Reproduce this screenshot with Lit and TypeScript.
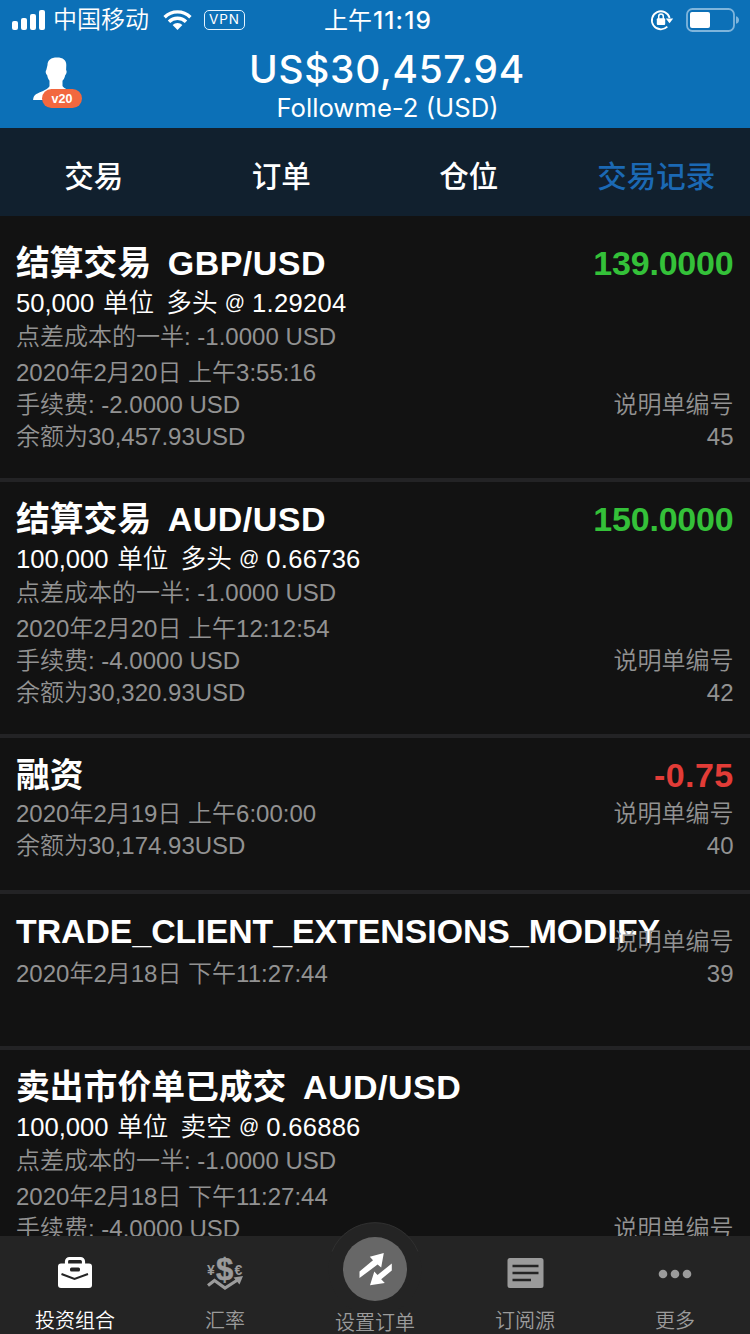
import { LitElement, html, svg, css, nothing } from "lit";
import { customElement, property } from "lit/decorators.js";
import { classMap } from "lit/directives/class-map.js";

interface Entry {
  title: string;
  pair?: string;
  amount?: string;
  negative?: boolean;
  units?: string;
  side?: string;
  price?: string;
  cost?: string;
  date: string;
  fee?: string;
  balance?: string;
  ref: string;
  short?: boolean;
  bare?: boolean;
}

const entries: Entry[] = [
  { title: "结算交易", pair: "GBP/USD", amount: "139.0000", units: "50,000", side: "多头", price: "1.29204", cost: "点差成本的一半: -1.0000 USD", date: "2020年2月20日 上午3:55:16", fee: "手续费: -2.0000 USD", balance: "余额为30,457.93USD", ref: "45" },
  { title: "结算交易", pair: "AUD/USD", amount: "150.0000", units: "100,000", side: "多头", price: "0.66736", cost: "点差成本的一半: -1.0000 USD", date: "2020年2月20日 上午12:12:54", fee: "手续费: -4.0000 USD", balance: "余额为30,320.93USD", ref: "42" },
  { title: "融资", amount: "-0.75", negative: true, date: "2020年2月19日 上午6:00:00", balance: "余额为30,174.93USD", ref: "40", short: true },
  { title: "TRADE_CLIENT_EXTENSIONS_MODIFY", date: "2020年2月18日 下午11:27:44", ref: "39", short: true, bare: true },
  { title: "卖出市价单已成交", pair: "AUD/USD", units: "100,000", side: "卖空", price: "0.66886", cost: "点差成本的一半: -1.0000 USD", date: "2020年2月18日 下午11:27:44", fee: "手续费: -4.0000 USD", ref: "" },
];

@customElement("status-bar")
class StatusBar extends LitElement {
  static styles = css`
    :host { display: grid; grid-template: 40px / 1fr auto 1fr; align-items: center; height: 40px; padding: 0 12px; color: #fff;
      font: 500 24px/40px "Inter", "Noto Sans CJK SC", sans-serif; }
    .side { display: flex; align-items: center; height: 40px; }
    .right { justify-content: flex-end; margin-right: -2px; }
    .carrier { font-size: 24px; font-weight: 350; margin: 0 14px 0 7px; }
    .time { margin-left: 6px; font-weight: 400; }
    .digits { font-size: 24.5px; font-weight: 500; letter-spacing: 1.1px; margin-left: 1px; }
    .vpn { margin-left: 12px; box-sizing: border-box; width: 41px; height: 20px; border: 1.5px solid #e4f4ff; border-radius: 5px;
      font-size: 13.5px; font-weight: 400; line-height: 17px; text-align: center; letter-spacing: 0.9px; }
    .lock { margin-right: 12px; }
    svg { display: block; flex: none; }
  `;
  render() {
    return html`
      <div class="side">
        <svg width="34" height="20" viewBox="0 0 34 20" fill="#fff">
          <rect x="0" y="11" width="6" height="9" rx="2" /><rect x="9" y="8" width="6" height="12" rx="2" />
          <rect x="18" y="4" width="6" height="16" rx="2" /><rect x="27" y="0" width="6" height="20" rx="2" />
        </svg>
        <span class="carrier">中国移动</span>
        <svg width="29" height="20" viewBox="0 0 29 20" fill="none" stroke="#fff" stroke-width="3.4">
          <path d="M1.6 7.2a18.3 18.3 0 0 1 25.8 0" /><path d="M6 11.8a12 12 0 0 1 17 0" />
          <path d="M14.5 20l-4.900-4.900a7 7 0 0 1 9.800 0z" fill="#fff" stroke="none" />
        </svg>
        <span class="vpn">VPN</span>
      </div>
      <span class="time">上午<span class="digits">11:19</span></span>
      <div class="side right">
        <svg class="lock" width="24" height="22" viewBox="0 0 24 22" fill="none" stroke="#fff" stroke-width="1.8">
          <path d="M17.300 17.600A9 9 0 1 1 19.600 9" />
          <path d="M15.800 9.600h7.400l-3.700 4.600z" fill="#fff" stroke="none" />
          <rect x="6.800" y="9.300" width="8.400" height="6.700" rx="1" fill="#fff" stroke="none" />
          <path d="M8.700 10V7.400a2.300 2.300 0 0 1 4.600 0V10" stroke-width="1.5" />
        </svg>
        <svg width="54" height="24" viewBox="0 0 54 24">
          <rect x="1" y="1" width="47" height="22" rx="5.5" fill="none" stroke="#7fb5dc" stroke-width="1.8" />
          <rect x="4" y="4" width="20" height="16" rx="2" fill="#fff" />
          <path d="M50 8.200c2 .5 3 2 3 3.800s-1 3.300-3 3.800z" fill="#7fb5dc" />
        </svg>
      </div>`;
  }
}

@customElement("record-row")
class RecordRow extends LitElement {
  @property({ attribute: false }) entry!: Entry;
  static styles = css`
    :host { display: block; }
    .row { display: flex; align-items: flex-start; box-sizing: border-box; height: 256px; padding: 14px 16.5px 0 16px;
      border-bottom: 4px solid #232325; color: #929292; white-space: nowrap;
      font: 350 24px/32px "Liberation Sans", "Noto Sans CJK SC", sans-serif; }
    .short { height: 156px; }
    .body { display: flex; width: 100%; }
    .left { flex: 1; width: 0; }
    .right { display: flex; flex-direction: column; justify-content: flex-end; text-align: right; }
    .left div, .right div { height: 32px; }
    .left .title { height: 46px; line-height: 46px; font-size: 33.800px; font-weight: 700; color: #fff; }
    .pair { font-size: 34px; margin-left: 16.500px; letter-spacing: 0.5px; }
    .right .amount { height: 46px; line-height: 46px; font-size: 34px; letter-spacing: -0.2px; font-weight: 700; color: #34c139; margin-bottom: auto; }
    .right .negative { color: #e23c37; letter-spacing: 0.4px; }
    .left .units { height: 34px; line-height: 34px; font-size: 25.600px; color: #fff; }
    .unit { margin: 0 -2px 0 1.500px; }
    .at { font-size: 20px; line-height: 1; vertical-align: 3px; }
    .price { letter-spacing: 0.250px; }
    .left .cost { height: 34px; line-height: 34px; margin-bottom: 3px; }
    .left .spaced { margin-top: 4px; }
  `;
  render() {
    const e = this.entry;
    return html`<div class=${classMap({ row: true, short: !!e.short })}>
      <div class="body">
        <div class="left">
          <div class="title">${e.title}${e.pair ? html`<span class="pair">${e.pair}</span>` : nothing}</div>
          ${e.units
            ? html`<div class="units">${e.units} <span class="unit">单位</span>&nbsp; ${e.side} <span class="at">@</span> <span class="price">${e.price}</span></div>`
            : nothing}
          ${e.cost ? html`<div class="cost">${e.cost}</div>` : nothing}
          <div class=${classMap({ spaced: !!e.bare })}>${e.date}</div>
          ${e.fee ? html`<div>${e.fee}</div>` : nothing}
          ${!e.bare ? html`<div>${e.balance ?? ""}</div>` : nothing}
        </div>
        <div class="right">
          ${e.amount ? html`<div class=${classMap({ amount: true, negative: !!e.negative })}>${e.amount}</div>` : nothing}
          <div>说明单编号</div>
          <div>${e.ref}</div>
        </div>
      </div>
    </div>`;
  }
}

const briefcase = svg`<path d="M9.500 8V5.500a3 3 0 0 1 3-3h11a3 3 0 0 1 3 3V8" fill="none" stroke="#fff" stroke-width="3.200"/>
  <rect x="1" y="7.500" width="34" height="24.500" rx="3" fill="#fff"/>
  <rect x="13" y="11.500" width="10" height="4" rx="1.500" fill="#242424"/>
  <path d="M4.500 18L17.500 23l13.500-5" fill="none" stroke="#242424" stroke-width="2"/>`;

const rates = svg`<text x="17.500" y="24" text-anchor="middle" class="dollar">$</text>
  <text x="4" y="19" text-anchor="middle" class="small">¥</text>
  <text x="31.500" y="19" text-anchor="middle" class="small">€</text>
  <path d="M1 29.500l6.500-5L18 32l12.500-8" fill="none" stroke="#9b9b9b" stroke-width="3.200"/>
  <path d="M26.500 21.500l9.500-1.500-3.500 8.500z" fill="#9b9b9b"/>`;

const feed = svg`<path d="M3 2h31a2.500 2.500 0 0 1 2.500 2.500v25a2.500 2.500 0 0 1-2.500 2.500H3a2.500 2.500 0 0 1-2.500-2.500V4.500A2.500 2.500 0 0 1 3 2z" fill="#9b9b9b"/>
  <path d="M5.500 10h26M5.500 17h26M5.500 24h18.500" stroke="#242424" stroke-width="2.600"/>`;

const dots = svg`<g fill="#9b9b9b"><circle cx="6" cy="18" r="4.300"/><circle cx="18" cy="18" r="4.300"/><circle cx="30" cy="18" r="4.300"/></g>`;

@customElement("tab-bar")
class TabBar extends LitElement {
  static styles = css`
    :host { display: grid; grid-template-columns: repeat(5, 1fr); height: 98px; background: #242424; color: #9b9b9b;
      font: 350 20px/28px "Noto Sans CJK SC", sans-serif; position: relative; }
    .tab { display: flex; flex-direction: column; align-items: center; justify-content: space-between; height: 98px; box-sizing: border-box; padding: 20px 0 0; }
    .tab svg { display: block; overflow: visible; }
    .active { color: #fff; }
    .center { padding: 0; }
    .center svg { margin-top: -14px; }
    .label { height: 28px; }
    .center .label { margin-bottom: -2px; }
    .dollar { font: 700 31px "Liberation Sans", sans-serif; fill: #9b9b9b; stroke: #9b9b9b; stroke-width: 0.5px; }
    .small { font: 700 14px "Liberation Sans", sans-serif; fill: #9b9b9b; }
  `;
  render() {
    return html`
      <div class="tab active"><svg width="36" height="36">${briefcase}</svg><span class="label">投资组合</span></div>
      <div class="tab"><svg width="36" height="36">${rates}</svg><span class="label">汇率</span></div>
      <div class="tab center">
        <svg width="94" height="84" viewBox="0 0 94 84">
          <circle cx="47" cy="47" r="46.500" fill="#242424" />
          <path d="M4 29.500A46.500 46.500 0 0 1 90 29.500" fill="none" stroke="#303030" />
          <circle cx="47" cy="47" r="32" fill="#676767" />
          <path d="M31.500 49.500L45 38.300 41.800 34.700 55.800 31 53.200 45.500 49.600 42.600 31.500 56z" fill="#fff" />
          <path d="M63.800 41.500L49.500 53 46.300 49.500 42 63.300 56.800 61 53.200 57.300 63.800 48.500z" fill="#fff" />
        </svg>
        <span class="label">设置订单</span>
      </div>
      <div class="tab"><svg width="37" height="36">${feed}</svg><span class="label">订阅源</span></div>
      <div class="tab"><svg width="36" height="36">${dots}</svg><span class="label">更多</span></div>`;
  }
}

@customElement("app-root")
class AppRoot extends LitElement {
  static styles = css`
    :host { display: flex; flex-direction: column; width: 750px; height: 1334px; overflow: hidden; background: #121212; }
    .top { height: 128px; background: #0c70b7; flex: none; }
    .account { display: grid; grid-template-columns: 88px 1fr 64px; height: 88px; color: #fff; font-family: "Inter", sans-serif; text-align: center; }
    .avatar { margin: 16px 0 0 33px; display: block; }
    .badge { font: 700 12.500px "Liberation Sans", sans-serif; fill: #fff; }
    .value { font-size: 38.800px; line-height: 46px; margin-top: 6px; font-weight: 550; letter-spacing: 0.750px; margin-left: 0; }
    .name { font-size: 25.700px; line-height: 32px; font-weight: 400; letter-spacing: 0; margin-left: 1px; }
    .tabs { display: grid; grid-template-columns: repeat(4, 1fr); height: 88px; flex: none; background: #11202e; color: #fff;
      font: 500 29.500px/93px "Noto Sans CJK SC", sans-serif; text-align: center; }
    .selected { color: #1b69b4; }
    .list { flex: 1; min-height: 0; overflow: hidden; padding-top: 10px; }
    tab-bar { flex: none; }
  `;
  render() {
    return html`
      <header class="top">
        <status-bar></status-bar>
        <div class="account">
          <svg class="avatar" width="50" height="54" viewBox="0 0 50 54">
            <path d="M24 1.500c6 0 9.300 2.500 9.300 7.500l-.2 5c1 1 .6 4-.9 5.200-.5 2.800-1.500 4.300-2.700 5.500v5.300c1.500 3 8 4.500 11.500 7l5 8H0c.3-4 1-6 4.500-7.500 5-2.200 10.500-4.500 12-7.200v-5.600c-1.200-1.500-2-3.200-2.300-5.500-1.600-1-2-4.200-.9-5.200L14.500 9c0-5 3.500-7.500 9.500-7.500z" fill="#fff" />
            <path d="M0 44h50v8H0z" fill="#0c70b7" />
            <rect x="9" y="33" width="40" height="19" rx="9.500" fill="#f2683f" />
            <text class="badge" x="29" y="47" text-anchor="middle">v20</text>
          </svg>
          <div>
            <div class="value">US$30,457.94</div>
            <div class="name">Followme-2 (USD)</div>
          </div>
        </div>
      </header>
      <nav class="tabs">
        <span>交易</span><span>订单</span><span>仓位</span><span class="selected">交易记录</span>
      </nav>
      <main class="list">${entries.map((e) => html`<record-row .entry=${e}></record-row>`)}</main>
      <tab-bar></tab-bar>`;
  }
}
